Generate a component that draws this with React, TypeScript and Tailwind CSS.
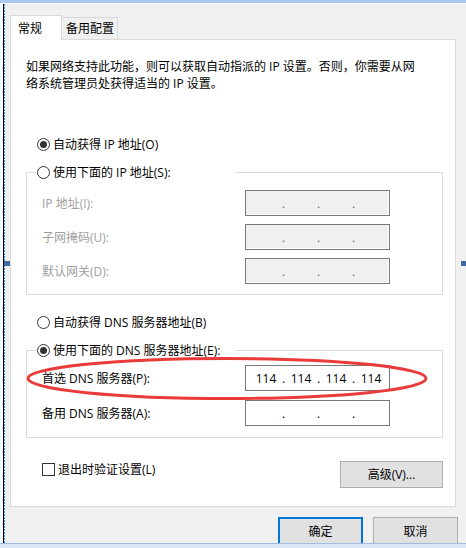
import { Fragment } from "react";

const ff = "font-[family-name:'Open_Sans','Noto_Sans_CJK_SC',sans-serif]";

function Radio({ checked }: { checked?: boolean }) {
  return (
    <span className="flex h-[13px] w-[13px] shrink-0 items-center justify-center rounded-full border border-[#333] bg-white">
      {checked && <span className="h-[7px] w-[7px] rounded-full bg-[#333]" />}
    </span>
  );
}

function RadioRow({ label, checked }: { label: string; checked?: boolean }) {
  return (
    <div className="flex h-[17px] items-center pl-px">
      <Radio checked={checked} />
      <span className="ml-[3px]">{label}</span>
    </div>
  );
}

function IpBox({ value, disabled }: { value?: string[]; disabled?: boolean }) {
  const parts = value ?? ["", "", "", ""];
  return (
    <div
      className={
        disabled
          ? "flex h-[26px] w-[145px] items-center border border-[#7a7a7a] bg-[#f0f0f0] pl-[5px] text-[#6d6d6d] shadow-[inset_-1px_-1px_0_#fff]"
          : "flex h-[26px] w-[145px] items-center border border-[#7a7a7a] bg-white pl-[5px] text-black"
      }
    >
      {parts.map((p, i) => (
        <Fragment key={i}>
          {i > 0 && <span className="w-[5px] text-center">.</span>}
          <span className="w-[30px] text-center">{p}</span>
        </Fragment>
      ))}
    </div>
  );
}

function Field({ label, disabled, value }: { label: string; disabled?: boolean; value?: string[] }) {
  return (
    <div className="flex items-center pl-[15px]">
      <span className={disabled ? "w-[203px] text-[#a0a0a0]" : "w-[203px]"}>{label}</span>
      <IpBox disabled={disabled} value={value} />
    </div>
  );
}

export default function App() {
  return (
    <div className={`relative flex h-[548px] w-[466px] flex-col overflow-hidden bg-[#f0f0f0] text-[12px] leading-[17px] text-black ${ff}`}>
      <div className="h-[3px] bg-[#a9c9ef]" />
      <div className="h-px bg-white" />

      <div className="flex flex-1">
        {/* selection edge */}
        <div className="flex w-[10px]">
          <div className="w-[3px] bg-[#f4f8fd]" />
          <div className="w-px bg-black" />
          <div className="w-px bg-[repeating-linear-gradient(to_bottom,#3d8ee8_0_2px,#fff_2px_3px)]" />
          <div className="flex-1" />
        </div>

        <div className="flex w-[446px] flex-col pt-[11px]">
          <div className="relative z-10 -mb-px flex items-end">
            <div className="flex h-[25px] w-[52px] items-center border border-b-0 border-[#d9d9d9] bg-white pl-[7px]">常规</div>
            <div className="flex h-[23px] w-[56px] items-center border border-l-0 border-[#d9d9d9] bg-[#f0f0f0] pl-[4px]">备用配置</div>
          </div>

          <div className="flex h-[468px] flex-col border border-[#d9d9d9] bg-white">
            <p className="mt-[18px] pl-[15px]">
              如果网络支持此功能，则可以获取自动指派的 IP 设置。否则，你需要从网
              <br />
              络系统管理员处获得适当的 IP 设置。
            </p>

            <div className="mt-[44px] ml-[25px]">
              <RadioRow label="自动获得 IP 地址(O)" checked />
            </div>

            <fieldset className="mt-[11px] ml-[15px] w-[417px] border border-[#dcdcdc]">
              <legend className="ml-[9px] w-[199px]">
                <RadioRow label="使用下面的 IP 地址(S):" />
              </legend>
              <div className="flex flex-col gap-[8px] pt-[9px] pb-[10px]">
                <Field label="IP 地址(I):" disabled />
                <Field label="子网掩码(U):" disabled />
                <Field label="默认网关(D):" disabled />
              </div>
            </fieldset>

            <div className="mt-[19px] ml-[25px]">
              <RadioRow label="自动获得 DNS 服务器地址(B)" />
            </div>

            <fieldset className="mt-[11px] ml-[15px] w-[417px] border border-[#dcdcdc]">
              <legend className="ml-[9px] w-[199px]">
                <RadioRow label="使用下面的 DNS 服务器地址(E):" checked />
              </legend>
              <div className="flex flex-col gap-[9px] pt-[6px] pb-[11px]">
                <Field label="首选 DNS 服务器(P):" value={["114", "114", "114", "114"]} />
                <Field label="备用 DNS 服务器(A):" />
              </div>
            </fieldset>

            <div className="mt-[23px] ml-[15px] flex w-[417px] items-start justify-between">
              <label className="flex h-[17px] items-center pl-[16px]">
                <span className="h-[13px] w-[13px] border border-[#333] bg-white" />
                <span className="ml-[3px]">退出时验证设置(L)</span>
              </label>
              <button className="flex h-[27px] w-[103px] items-center justify-center border border-[#adadad] bg-[#e1e1e1]">
                高级(V)...
              </button>
            </div>
          </div>

          <div className="-mr-[2px] mt-[10px] flex h-[26px] justify-end gap-[10px] overflow-hidden">
            <button className="flex h-[28px] w-[85px] shrink-0 items-center justify-center border-2 border-[#0078d7] bg-[#e1e1e1]">
              确定
            </button>
            <button className="flex h-[28px] w-[85px] shrink-0 items-center justify-center border border-[#adadad] bg-[#e1e1e1]">
              取消
            </button>
          </div>
        </div>

        <div className="flex-1" />
      </div>

      <div className="h-px bg-[#9fbbe0]" />
      <div className="h-[4px] bg-[#dbe7f6]" />

      {/* resize handles */}
      <div className="absolute left-[4px] top-[261px] h-[5px] w-[6px] bg-[#41689f]" />
      <div className="absolute right-0 top-[261px] h-[5px] w-[5px] bg-[#41689f]" />

      {/* annotation */}
      <svg className="pointer-events-none absolute left-0 top-0" width="466" height="548">
        <ellipse cx="227" cy="378.5" rx="199" ry="20" fill="none" stroke="#ea3b3b" strokeWidth="3" />
      </svg>
    </div>
  );
}
